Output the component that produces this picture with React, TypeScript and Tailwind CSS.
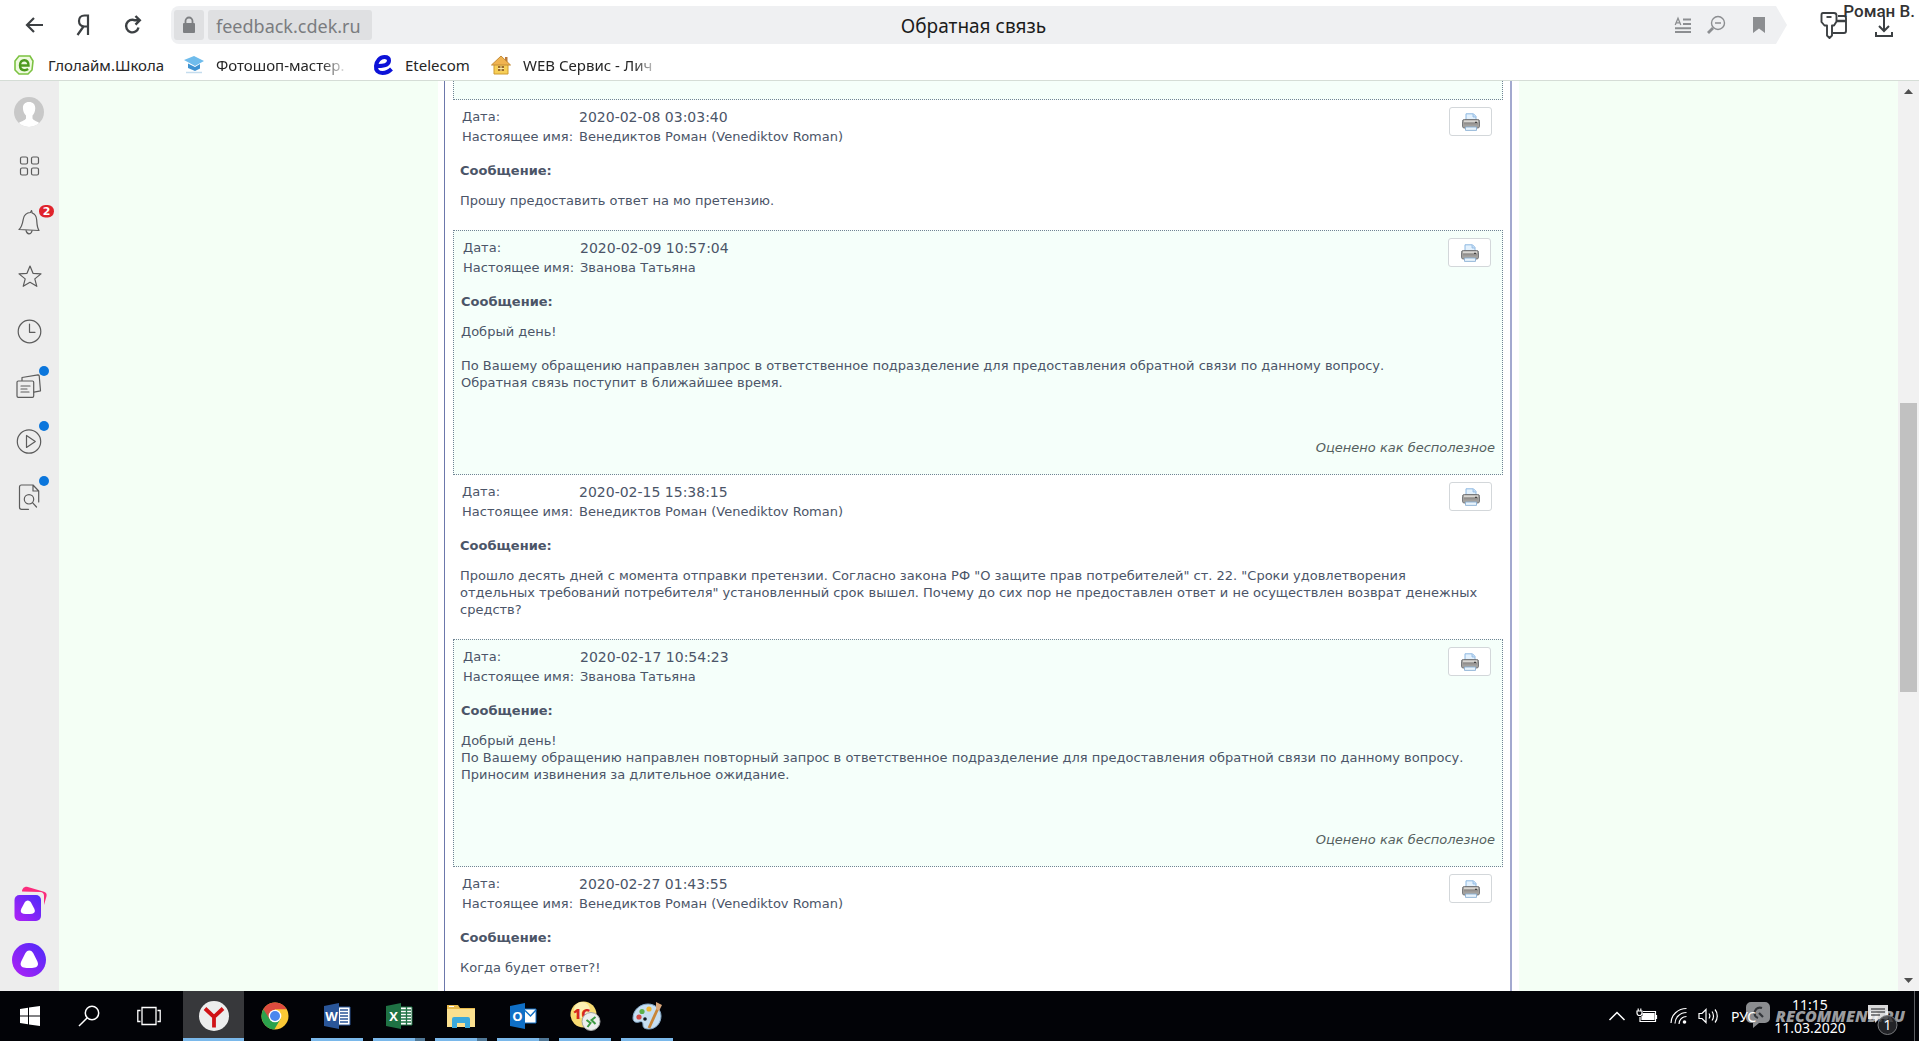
import React from "react";

type Message = {
  date: string;
  name: string;
  text: string;
  reply?: boolean;
};

const messages: Message[] = [
  {
    date: "2020-02-08 03:03:40",
    name: "Венедиктов Роман (Venediktov Roman)",
    text: "Прошу предоставить ответ на мо претензию.",
  },
  {
    date: "2020-02-09 10:57:04",
    name: "Званова Татьяна",
    text: "Добрый день!\n\nПо Вашему обращению направлен запрос в ответственное подразделение для предоставления обратной связи по данному вопросу.\nОбратная связь поступит в ближайшее время.",
    reply: true,
  },
  {
    date: "2020-02-15 15:38:15",
    name: "Венедиктов Роман (Venediktov Roman)",
    text: 'Прошло десять дней с момента отправки претензии. Согласно закона РФ "О защите прав потребителей" ст. 22. "Сроки удовлетворения\nотдельных требований потребителя" установленный срок вышел. Почему до сих пор не предоставлен ответ и не осуществлен возврат денежных\nсредств?',
  },
  {
    date: "2020-02-17 10:54:23",
    name: "Званова Татьяна",
    text: "Добрый день!\nПо Вашему обращению направлен повторный запрос в ответственное подразделение для предоставления обратной связи по данному вопросу.\nПриносим извинения за длительное ожидание.",
    reply: true,
  },
  {
    date: "2020-02-27 01:43:55",
    name: "Венедиктов Роман (Venediktov Roman)",
    text: "Когда будет ответ?!",
  },
];

function Printer() {
  return (
    <svg width="18" height="18" viewBox="0 0 18 18" aria-hidden="true">
      <path d="M4 8V.8h7.500L14 3.400V8z" fill="#e3f1fd" stroke="#8db8e2" />
      <path d="M11 1v3h3" fill="#c2dcf5" stroke="#8db8e2" strokeWidth=".8" />
      <rect x=".5" y="6.500" width="17" height="8.500" rx="1.800" fill="#a3a19e" stroke="#77797c" />
      <path d="M2 8.200h14" stroke="#d8d6d2" strokeWidth="1.600" />
      <path d="M2 10.800h14" stroke="#8a8886" />
      <path d="M13 9.400h2" stroke="#444" strokeWidth="1.400" />
      <path d="M3.500 14h11v3.400h-11z" fill="#e8f3fc" stroke="#8bb0d4" strokeWidth=".9" />
    </svg>
  );
}

function MessageCard({ m }: { m: Message }) {
  return (
    <article className={m.reply ? "border border-dotted border-[#718394] bg-[#f5fffa] px-[7px] pt-[7px] pb-[18px]" : "px-[7px] pt-[7px] pb-[21px]"}>
      <div className="flex items-start justify-between pr-1">
        <dl className="grid grid-cols-[117px_1fr] pl-[2px] leading-5">
          <dt className="whitespace-nowrap">Дата:</dt>
          <dd className="text-[14px] leading-5">{m.date}</dd>
          <dt className="whitespace-nowrap">Настоящее имя:</dt>
          <dd>{m.name}</dd>
        </dl>
        <button aria-label="Печать" className="flex h-[29px] w-[43px] items-center justify-center rounded-[3px] border border-[#d3d7da] bg-white">
          <Printer />
        </button>
      </div>
      <h2 className="mt-[15px] font-bold">Сообщение:</h2>
      <p className="mt-[13px] whitespace-pre-line">{m.text}</p>
      {m.reply && <p className="mt-12 text-right italic text-[#555f5f]">Оценено как бесполезное</p>}
    </article>
  );
}

function SideButton({ label, children }: { label: string; children: React.ReactNode }) {
  return (
    <button aria-label={label} className="block">
      <svg width="59" height="55" viewBox="0 0 59 55" fill="none" stroke="#5c5c5c" strokeWidth="1.200" strokeLinejoin="round" strokeLinecap="round">
        {children}
      </svg>
    </button>
  );
}

const dot = <circle cx="44" cy="11" r="5" fill="#0b76dc" stroke="none" />;

function Sidebar() {
  return (
    <nav className="flex w-[59px] shrink-0 flex-col bg-[#ededed] pt-1">
      <SideButton label="Профиль">
        <clipPath id="avatar"><circle cx="29" cy="27" r="15" /></clipPath>
        <circle cx="29" cy="27" r="15" fill="#c8c8c8" stroke="none" />
        <path clipPath="url(#avatar)" d="M29 17c-4.500 0-6.500 3-6 7 .2 3 1.500 5 3 6.500v3c-1 2.500-6 2.500-9 6V43h24v-3.500c-3-3.500-7.500-3.500-8.500-6v-3c1.500-1.500 2.500-3.500 2.700-6.500.4-4-1.700-7-6.200-7z" fill="#fff" stroke="none" />
      </SideButton>
      <SideButton label="Табло">
        <rect x="20.500" y="17" width="7" height="7" rx="1.500" />
        <rect x="31.500" y="17" width="7" height="7" rx="1.500" />
        <rect x="20.500" y="28" width="7" height="7" rx="1.500" />
        <rect x="31.500" y="28" width="7" height="7" rx="1.500" />
      </SideButton>
      <SideButton label="Уведомления">
        <path d="M31.500 15.500l-1 2c-4 .2-6.500 2.500-7.200 6.500-.8 4.500-1.300 8-4.300 10.500l20 1c-2-3-2-6.500-2.300-10.500-.2-3.500-1.700-6-4.500-7zM26 35.500c.5 2 1.500 3.200 3 3.300 1.500 0 2.500-1 3-3" />
        <rect x="39" y="10" width="15" height="12.500" rx="6.200" fill="#e0232c" stroke="none" />
        <text x="46.500" y="20.300" textAnchor="middle" fontFamily="DejaVu Sans" fontWeight="700" fontSize="11" fill="#fff" stroke="none">2</text>
      </SideButton>
      <SideButton label="Закладки">
        <path d="M30 16l3 7.300 8 .6-6.200 5 2 7.400-6.800-4-6.800 4 2-7.400-6.200-5 8-.6z" />
      </SideButton>
      <SideButton label="История">
        <circle cx="29.500" cy="26.500" r="11.300" />
        <path d="M29.500 19v8.300H35" />
      </SideButton>
      <SideButton label="Коллекции">
        <rect x="17" y="21" width="16.700" height="16.300" rx="1.300" />
        <path d="M22 20.500v-3l16-2.700c.8 0 1 .2 1.200 1l1.300 15-6.500 1.300M21 26h9M21 29h6M21 32h8" />
        {dot}
      </SideButton>
      <SideButton label="Видео">
        <circle cx="29" cy="26.500" r="11.700" />
        <path d="M26.500 20.500v12l8.800-6z" />
        {dot}
      </SideButton>
      <SideButton label="Поиск по документам">
        <path d="M28.500 39.300h-7a2 2 0 0 1-2-2V17a2 2 0 0 1 2-2H33l5.700 6V32M33 15v6h5.700" />
        <circle cx="29" cy="29.300" r="4.700" />
        <path d="M32.500 32.700l4 4.300" />
        {dot}
      </SideButton>
      <div className="mt-auto pb-1">
        <SideButton label="Сервисы">
          <defs>
            <linearGradient id="alice" x1="1" y1="0" x2="0" y2="1">
              <stop offset="0" stopColor="#4b2bfa" />
              <stop offset="1" stopColor="#b221f5" />
            </linearGradient>
          </defs>
          <path d="M22 14.500c0-2.500 2-5 5-4.700l17 5c2.300.8 3 2.500 2.500 4.500L44 28V19c0-2-1-4-4-4z" fill="#fb2c7c" stroke="none" />
          <rect x="14.500" y="18" width="26.500" height="26" rx="5" fill="url(#alice)" stroke="none" />
          <path d="M27.800 23.500c1.500 0 2.500 1 3.300 2.200l3.200 6c1.200 2.500.5 4.500-2 5-3 .5-6 .5-9 0-2.500-.5-3.200-2.500-2-5l3.200-6c.8-1.200 1.800-2.200 3.300-2.200z" fill="#fff" stroke="none" />
        </SideButton>
        <SideButton label="Алиса">
          <circle cx="29" cy="28" r="17" fill="url(#alice)" stroke="none" />
          <path d="M29.300 18.500c2 0 3 1.200 4 2.700l4 8c1.500 3.200.6 5.600-2.500 6.200-3.700.7-7.500.7-11 0-3-.6-4-3-2.500-6.200l4-8c1-1.500 2-2.700 4-2.700z" fill="#fff" stroke="none" />
        </SideButton>
      </div>
    </nav>
  );
}

function Toolbar() {
  return (
    <header className="relative flex h-[50px] shrink-0 items-center bg-white font-['Noto_Sans',sans-serif]">
      <div className="flex w-[171px] shrink-0 items-center gap-[29px] pl-[24px] text-[#3c4043]">
        <button aria-label="Назад">
          <svg width="20" height="20" viewBox="0 0 20 20" fill="none" stroke="currentColor" strokeWidth="2.200"><path d="M10 3L3 10l7 7M3 10h16" /></svg>
        </button>
        <button aria-label="Яндекс">
          <svg width="20" height="24" viewBox="0 0 20 24" fill="none" stroke="currentColor" strokeWidth="2.200"><path d="M15 22V2.500h-3.500C8 2.500 6 5 6 8s2 5.500 5.500 5.500H15M10.500 13.500L4.500 22" /></svg>
        </button>
        <button aria-label="Обновить">
          <svg width="22" height="22" viewBox="0 0 22 22" fill="none" stroke="currentColor" strokeWidth="2.400"><path d="M16.500 13.500A6.300 6.300 0 1 1 13 6.300h4M13.500 2l4.300 4.300-4.300 4.300" /></svg>
        </button>
      </div>
      <div className="grid h-[38px] flex-1 grid-cols-[1fr_auto_1fr] items-center rounded-l-lg bg-[#eff0f2] pr-[21px] pl-[3px] [clip-path:polygon(0_0,calc(100%-11px)_0,100%_50%,calc(100%-11px)_100%,0_100%)]">
        <div className="flex gap-1">
          <button aria-label="Защищённое соединение" className="flex h-[30px] w-[30px] items-center justify-center rounded-[3px] bg-[#dfe0e2]">
            <svg width="14" height="18" viewBox="0 0 14 18"><path d="M3.500 8V5a3.500 3.500 0 0 1 7 0v3" fill="none" stroke="#7d7f82" strokeWidth="1.800" /><rect x="1" y="7" width="12" height="10" rx="1" fill="#7d7f82" /></svg>
          </button>
          <input aria-label="Адрес" defaultValue="feedback.cdek.ru" className="h-[30px] w-[164px] rounded-[3px] bg-[#dfe0e2] px-2 pt-[2px] text-[18px] text-[#7a7c7f] outline-none" />
        </div>
        <h1 className="pt-[2px] pl-[7px] text-[19px] text-[#1c1c1c]">Обратная связь</h1>
        <div className="flex items-center justify-end gap-[14px] text-[#8c8e91]">
          <button aria-label="Режим чтения">
            <svg width="18" height="18" viewBox="0 0 18 18" fill="none" stroke="currentColor" strokeWidth="1.900"><path d="M1.200 9L4 2.200 6.800 9M2 6.800h4" strokeWidth="1.300" /><path d="M9 3.500h8M9 8h8M1 12.300h16M1 16h16" /></svg>
          </button>
          <button aria-label="Масштаб">
            <svg width="20" height="20" viewBox="0 0 20 20" fill="none" stroke="currentColor" strokeWidth="1.400"><circle cx="12" cy="8" r="6.500" /><path d="M9 8h6" /><path d="M7 13l-5 5" strokeWidth="2.800" /></svg>
          </button>
          <button aria-label="В закладки" className="pl-3">
            <svg width="14" height="18" viewBox="0 0 14 18" fill="currentColor"><path d="M1 1h12v16l-6-4.500L1 17z" /></svg>
          </button>
        </div>
      </div>
      <div className="flex w-[132px] shrink-0 items-center justify-between pr-[25px] pl-[33px] text-[#3c4043]">
        <button aria-label="Пароли">
          <svg width="28" height="28" viewBox="0 0 28 28" fill="none" stroke="currentColor" strokeWidth="1.900" strokeLinejoin="round"><path d="M18 5h6c1.300 0 2 .8 2 2v13c0 1.200-.8 2-2 2H13" /><path d="M17 10h9" strokeWidth="2.500" /><path d="M3 2h11c1.500 0 2.500 1 2.500 2.500v6L14 14.500h-2v10L9.500 27 7 24.500v-10H4.500L1.500 11V4c0-1.200.5-2 1.500-2z" fill="#fff" /><path d="M6.500 6h5" /></svg>
        </button>
        <button aria-label="Загрузки" className="pt-1">
          <svg width="20" height="22" viewBox="0 0 20 22" fill="none" stroke="currentColor" strokeWidth="2"><path d="M10 1v14M5 10l5 5 5-5M2 16v4h16v-4" /></svg>
        </button>
      </div>
      <span className="absolute top-0 right-[4px] font-['Roboto',sans-serif] text-[17px] leading-[22px] font-medium text-[#333]">Роман В.</span>
    </header>
  );
}

function Bookmarks() {
  return (
    <nav className="flex h-[30px] shrink-0 items-center bg-white pl-[14px] font-['Noto_Sans',sans-serif] text-[15px] whitespace-nowrap text-[#262626]">
      <a href="#gl" className="flex w-[170px] items-center gap-[14px]">
        <svg width="20" height="20" viewBox="0 0 20 20" className="shrink-0" fill="none"><path d="M5 1h11l3 5-1 9-4 4H5l-4-4V6z" fill="#eefadf" stroke="#7cc242" strokeWidth="1.600" /><path d="M6 10.500h8.500C14.500 7 13 5.300 10.300 5.300S6 7.200 6 10.200s1.700 5 4.500 5c1.500 0 2.600-.4 3.600-1.200" stroke="#4c9a1d" strokeWidth="2.400" /></svg>
        Глолайм.Школа
      </a>
      <a href="#ps" className="flex w-[188px] items-center gap-3">
        <svg width="20" height="20" viewBox="0 0 20 20" className="shrink-0"><path d="M10 1l10 5-9 5L0 5z" fill="#6fbcec" /><path d="M4 8.500l7 3.500 5-3v4.500L11 16l-7-3z" fill="#3f93d2" /><path d="M2 17.500h16" stroke="#c4dcee" strokeWidth="1.500" /></svg>
        <span className="w-[132px] overflow-hidden [mask-image:linear-gradient(to_right,black_80%,transparent)]">Фотошоп-мастер.</span>
      </a>
      <a href="#et" className="flex w-[119px] items-center gap-[11px]">
        <svg width="22" height="22" viewBox="0 0 22 22" className="shrink-0" fill="none" stroke="#0c12d8" strokeWidth="4"><path d="M6 12c6 0 11-1.500 11-5.500C17 4 15 3 12.500 3 8 3 4.500 7 4 12c-.5 4.500 2 7 6.500 7 3.500 0 6.500-1.500 9-4" /></svg>
        Etelecom
      </a>
      <a href="#web" className="flex items-center gap-3">
        <svg width="20" height="20" viewBox="0 0 20 20" className="shrink-0"><path d="M3 9h14v10H3z" fill="#f7cf57" stroke="#cf9a2e" /><path d="M14 2h2.500v5H14z" fill="#b8783b" /><path d="M10 1l9.500 9H.5z" fill="#f0b350" stroke="#c48c38" /><path d="M7 11h6v5H7z" fill="#9a6a2a" /><path d="M10 11v5M7 13.500h6" stroke="#fbe9a5" /></svg>
        <span className="w-[138px] overflow-hidden [mask-image:linear-gradient(to_right,black_80%,transparent)]">WEB Сервис - Лич</span>
      </a>
    </nav>
  );
}

function OfficeIcon({ color, letter, children }: { color: string; letter: string; children: React.ReactNode }) {
  return (
    <svg width="28" height="28" viewBox="0 0 28 28">
      {children}
      <path d="M1 4l15-3v26L1 24z" fill={color} />
      <text x="8.500" y="19" textAnchor="middle" fontFamily="Open Sans" fontWeight="700" fontSize="13" fill="#fff">{letter}</text>
    </svg>
  );
}

function TaskButton({ label, running, multi, active, children }: { label: string; running?: boolean; multi?: boolean; active?: boolean; children: React.ReactNode }) {
  return (
    <button aria-label={label} className={active ? "relative flex h-full w-[61px] items-center justify-center bg-[#37383b]" : "relative flex h-full w-[62px] items-center justify-center"}>
      {children}
      {active && <span className="absolute inset-x-0 bottom-0 h-[3px] bg-[#7ab8ea]" />}
      {running && <span className={multi ? "absolute inset-x-[5px] bottom-0 h-[3px] border-r-[10px] border-[#4f7796] bg-[#7ab8ea]" : "absolute inset-x-[5px] bottom-0 h-[3px] bg-[#7ab8ea]"} />}
    </button>
  );
}

function Taskbar() {
  return (
    <footer className="relative flex h-[50px] shrink-0 items-center bg-[#020307] font-['Noto_Sans',sans-serif] text-white">
      <div className="flex h-full">
        <button aria-label="Пуск" className="flex w-[59px] items-center justify-center">
          <svg width="20" height="20" viewBox="0 0 20 20" fill="#fff"><path d="M0 3l8-1.200v7.700H0zM9 1.600L20 0v9.500H9zM0 10.500h8v7.700L0 17zM9 10.500h11V20L9 18.400z" /></svg>
        </button>
        <button aria-label="Поиск" className="flex w-[60px] items-center justify-center">
          <svg width="22" height="22" viewBox="0 0 22 22" fill="none" stroke="#fff" strokeWidth="1.500"><circle cx="14" cy="8" r="6.700" /><path d="M9.300 12.700L1 21" /></svg>
        </button>
        <button aria-label="Представление задач" className="flex w-[64px] items-center justify-center pr-1">
          <svg width="24" height="20" viewBox="0 0 24 20" fill="none" stroke="#fff" strokeWidth="1.300"><path d="M5 1.500h14v17H5zM3.500 4.500H.8v11h2.700M20.500 4.500h2.700v11h-2.700" /></svg>
        </button>
        <TaskButton label="Яндекс.Браузер" active>
          <svg width="32" height="32" viewBox="0 0 32 32"><circle cx="16" cy="16" r="15" fill="#eceded" /><path d="M7 8.500l9 8.500 9-8.500M16 16v11.500" fill="none" stroke="#d01216" strokeWidth="3.800" /></svg>
        </TaskButton>
        <TaskButton label="Chrome">
          <svg width="28" height="28" viewBox="0 0 28 28"><circle cx="14" cy="14" r="13.500" fill="#fbc935" /><path d="M14 14L2.300 7.300A13.500 13.500 0 0 1 25.700 7.300H14z" fill="#dd4b3e" /><path d="M2.300 7.300A13.500 13.500 0 0 0 13.300 27.500L19.500 17 14 14z" fill="#2ba24c" /><path d="M2.300 7.300L8.500 17l5.500-9.700z" fill="#dd4b3e" opacity=".9" /><circle cx="14" cy="14" r="6.300" fill="#fff" /><circle cx="14" cy="14" r="5" fill="#4a87ee" /></svg>
        </TaskButton>
        <TaskButton label="Word" running>
          <OfficeIcon color="#2a5699" letter="W"><path d="M15 5h12v18H15z" fill="#fff" stroke="#2a5699" /><path d="M17 8h8M17 11h8M17 14h8M17 17h8M17 20h8" stroke="#2a5699" strokeWidth="1.300" /></OfficeIcon>
        </TaskButton>
        <TaskButton label="Excel" running multi>
          <OfficeIcon color="#1f7244" letter="X"><path d="M15 5h12v18H15z" fill="#fff" stroke="#1f7244" /><path d="M16 8h10M16 11h10M16 14h10M16 17h10M16 20h10M21.500 5v18" stroke="#1f7244" strokeWidth="1.300" /></OfficeIcon>
        </TaskButton>
        <TaskButton label="Проводник" running multi>
          <svg width="28" height="28" viewBox="0 0 28 28"><path d="M0 3h11l2 3h15v19H0z" fill="#e8bb4c" /><path d="M0 7h28v18H0z" fill="#fbe08f" /><path d="M5 26V17a2 2 0 0 1 2-2h14a2 2 0 0 1 2 2v9h-5v-5h-8v5z" fill="#3ba9dc" /><path d="M2 4.500h5" stroke="#fff" /></svg>
        </TaskButton>
        <TaskButton label="Outlook" running multi>
          <OfficeIcon color="#0f6fc6" letter="O"><path d="M15 7h12v14H15z" fill="#fff" stroke="#0f6fc6" /><path d="M16 8.500l5.500 5.500L27 8" fill="none" stroke="#0f6fc6" strokeWidth="1.400" /></OfficeIcon>
        </TaskButton>
        <TaskButton label="1С" running>
          <svg width="32" height="32" viewBox="0 0 32 32"><circle cx="14.500" cy="14.500" r="13" fill="#f8dc72" /><circle cx="13" cy="10" r="8" fill="#fdf0b4" /><text x="4" y="19" fontFamily="Open Sans" fontWeight="800" fontSize="14" fill="#d5281d">1С</text><circle cx="22" cy="21.500" r="9" fill="#eceeed" stroke="#a3a6a5" /><path d="M17.500 20l4 3-3 4M26.500 17l-4 3 4 4" fill="none" stroke="#3c9a41" strokeWidth="2" /></svg>
        </TaskButton>
        <TaskButton label="Paint" running>
          <svg width="30" height="30" viewBox="0 0 30 30"><path d="M16 3C8 3 1 9 1 17c0 4 3 5 6 4s4 0 4 3 2 4 6 4c7 0 12-6 12-13S23 3 16 3z" fill="#c6dff2" stroke="#84a9c8" /><circle cx="7" cy="16" r="2.600" fill="#d44a45" /><circle cx="10" cy="10.500" r="2.600" fill="#5bb04d" /><circle cx="17" cy="8" r="2.600" fill="#efb632" /><circle cx="13" cy="18" r="1.800" fill="#121820" /><path d="M27 5L17 27" stroke="#c98638" strokeWidth="2.800" /><path d="M24 1l6 3-3 6-3-2z" fill="#d9a77b" /></svg>
        </TaskButton>
      </div>
      <div className="pointer-events-none absolute right-[14px] bottom-3 flex items-center gap-[6px] text-[#9a9c9f]">
        <svg width="24" height="27" viewBox="0 0 24 27"><path d="M5 0h14a5 5 0 0 1 5 5v11a5 5 0 0 1-5 5h-6l-6 5v-5H5a5 5 0 0 1-5-5V5a5 5 0 0 1 5-5z" fill="#8b8d90" /><path d="M16 6c-3-1-6 0-7 3s0 6 3 7M13 11l4 4" fill="none" stroke="#33363a" strokeWidth="2.200" /></svg>
        <span className="font-['Open_Sans',sans-serif] text-[16px] leading-5 font-extrabold italic">RECOMMEND.RU</span>
      </div>
      <div className="relative ml-auto flex h-full items-center">
        <button aria-label="Скрытые значки" className="mr-[10px]">
          <svg width="18" height="12" viewBox="0 0 18 12" fill="none" stroke="#fff" strokeWidth="1.500"><path d="M1.500 10L9 2.500l7.500 7.500" /></svg>
        </button>
        <svg className="mr-3" width="22" height="18" viewBox="0 0 22 18" fill="none" stroke="#fff" strokeWidth="1.200"><path d="M7 4.500h12.500v10H4V10M20.500 8v4" /><path d="M7 6.500h11v6H6v-3h1z" fill="#fff" /><path d="M1 4h5v2c0 1.500-1 2.500-2.500 2.500S1 7.500 1 6zM2.200 4V1.500M4.800 4V1.500" /></svg>
        <svg className="mr-[10px]" width="18" height="18" viewBox="0 0 18 18" fill="none" stroke="#fff" strokeWidth="1.200"><path d="M1 16C1 8 8 1.500 16.500 1.500M5 16.500C5 10.500 10 5.500 16.500 5.500M9 17c0-4.200 3.300-7.500 7.500-7.500" /><circle cx="14.500" cy="15" r="1.800" fill="#fff" stroke="none" /></svg>
        <svg className="mr-3" width="21" height="18" viewBox="0 0 21 18" fill="none" stroke="#fff" strokeWidth="1.200"><path d="M1 6.500h3l4-4v13l-4-4H1zM11 6.500c1 1.500 1 3.500 0 5M14 4.500c2 2.500 2 6.500 0 9M17 2.500c3 3.500 3 9.500 0 13" /></svg>
        <span className="w-[28px] text-[14px]">РУС</span>
        <div className="ml-[14px] w-[74px] text-center text-[14px] leading-[23px]">
          <div>11:15</div>
          <div>11.03.2020</div>
        </div>
        <button aria-label="Уведомления" className="mr-[15px] ml-5 pt-2">
          <svg width="32" height="32" viewBox="0 0 32 32"><path d="M1 1h20v14h-9l-4 4v-4H1z" fill="#fff" opacity=".85" /><path d="M4 5h14M4 8h14M4 11h9" stroke="#15171a" /><circle cx="20.500" cy="21" r="9.500" fill="#2a2c2f" stroke="#77797c" fillOpacity=".8" /><text x="20.500" y="26" textAnchor="middle" fontFamily="Noto Sans" fontSize="14" fill="#fff">1</text></svg>
        </button>
        <span className="mr-1 h-full w-px bg-[#5c5f63]" />
      </div>
    </footer>
  );
}

export default function App() {
  return (
    <div className="flex h-screen flex-col overflow-hidden">
      <Toolbar />
      <Bookmarks />
      <div className="flex min-h-0 flex-1 border-t border-[#d5ddd6]">
        <Sidebar />
        <main className="min-w-0 flex-1 overflow-hidden bg-[#f4fff5] font-['DejaVu_Sans',sans-serif] text-[13px] leading-[17px] text-[#4b5568]">
          <div className="mx-auto w-full max-w-[1081px] bg-white pr-[7px] pl-[6px]">
            <div className="border-r-2 border-l border-r-[#a3a9cf] border-l-[#6c78ab] pr-[7px] pl-2">
              <div className="h-[19px] border border-t-0 border-dotted border-[#718394] bg-[#f5fffa]" />
              {messages.map((m) => (
                <MessageCard key={m.date} m={m} />
              ))}
            </div>
          </div>
        </main>
        <div className="flex w-[21px] shrink-0 flex-col items-center bg-[#f1f1f1]" role="scrollbar" aria-controls="root" aria-valuenow={50}>
          <svg width="9" height="5" viewBox="0 0 9 5" className="my-2 shrink-0"><path d="M0 5l4.500-5L9 5z" fill="#505050" /></svg>
          <div className="min-h-0 flex-[301]" />
          <div className="w-[17px] flex-[289] bg-[#c1c1c1]" />
          <div className="min-h-0 flex-[278]" />
          <svg width="9" height="5" viewBox="0 0 9 5" className="my-2 shrink-0"><path d="M0 0h9L4.500 5z" fill="#505050" /></svg>
        </div>
      </div>
      <Taskbar />
    </div>
  );
}
